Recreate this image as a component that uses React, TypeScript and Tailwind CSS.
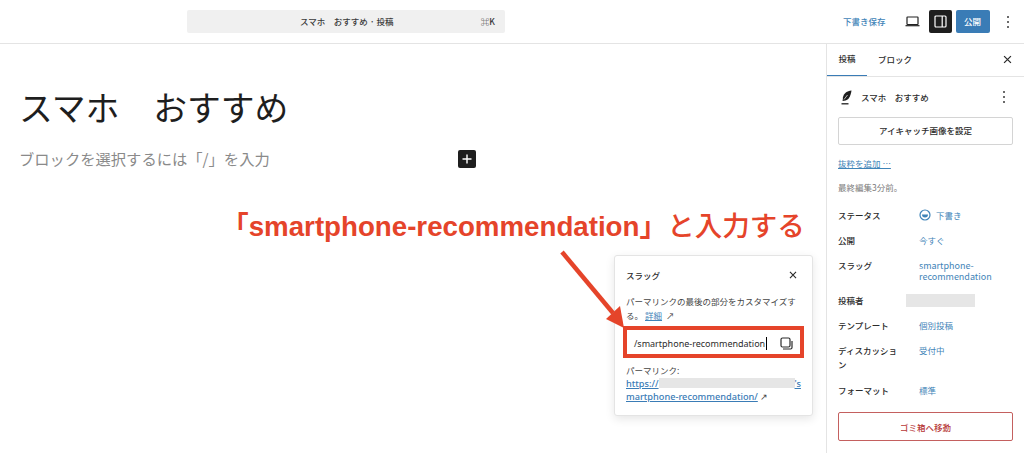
const sans = "font-['Noto_Sans_CJK_JP','Noto_Sans',sans-serif]";

function Dots({ className }: { className?: string }) {
  return (
    <svg width="4" height="14" viewBox="0 0 4 14" className={className} aria-hidden>
      <circle cx="2" cy="2" r="1" fill="#3a3a3a" />
      <circle cx="2" cy="7" r="1" fill="#3a3a3a" />
      <circle cx="2" cy="12" r="1" fill="#3a3a3a" />
    </svg>
  );
}

function Close({ size = 10 }: { size?: number }) {
  return (
    <svg width={size} height={size} viewBox="0 0 10 10" aria-hidden>
      <path d="M1.2 1.2l7.6 7.6M8.8 1.2L1.2 8.8" stroke="#2a2a2a" strokeWidth="1.4" fill="none" />
    </svg>
  );
}

function TopBar() {
  return (
    <header className="flex h-[44px] shrink-0 items-center border-b border-[#e4e4e4] bg-white">
      <div className="ml-[187px] flex h-[23px] w-[318px] items-center rounded-[2px] bg-[#f0f0f0] text-[8.5px] font-medium text-[#3a3a3a]">
        <span className="ml-[113px] whitespace-pre">スマホ　おすすめ · 投稿</span>
        <span className="ml-auto mr-[10px]">⌘K</span>
      </div>
      <span className="ml-[338px] text-[8.5px] font-medium text-[#3f84b8]">下書き保存</span>
      <svg width="15" height="11" viewBox="0 0 15 11" className="ml-[19px]" aria-hidden>
        <rect x="2" y="1" width="11" height="7.5" rx="0.5" fill="none" stroke="#222" strokeWidth="1.2" />
        <path d="M0.5 9.7h14" stroke="#222" strokeWidth="1.2" />
      </svg>
      <div className="ml-[9px] flex h-[23px] w-[23px] items-center justify-center rounded-[2px] bg-[#1e1e1e]">
        <svg width="13" height="13" viewBox="0 0 13 13" aria-hidden>
          <rect x="1" y="1" width="11" height="11" rx="1" fill="none" stroke="#fff" strokeWidth="1.2" />
          <path d="M8.2 1v11" stroke="#fff" strokeWidth="1.2" />
        </svg>
      </div>
      <div className="ml-[4px] flex h-[23px] w-[34px] items-center justify-center rounded-[2px] bg-[#3a7cb6] text-[8.5px] font-medium text-white">
        公開
      </div>
      <Dots className="ml-[16px]" />
    </header>
  );
}

function MetaRow({ label, children, className }: { label: React.ReactNode; children: React.ReactNode; className?: string }) {
  return (
    <div className={`flex text-[8.5px] leading-[14px] ${className ?? ""}`}>
      <span className="w-[81px] shrink-0 pr-[20px] font-medium text-[#2b2b2b]">{label}</span>
      <div className="text-[#3f84b8]">{children}</div>
    </div>
  );
}

function Sidebar() {
  return (
    <aside className="w-[198px] shrink-0 border-l border-[#e4e4e4] bg-white">
      <div className="flex h-[33px] items-center border-b border-[#e4e4e4] pb-[2px] text-[8.5px] font-medium text-[#2b2b2b]">
        <div className="-mb-[2px] flex h-[32px] w-[40px] items-center justify-center border-b-[1.5px] border-[#3a7cb6] pb-[2px]">投稿</div>
        <span className="ml-[11px]">ブロック</span>
        <span className="ml-auto mr-[12px] flex">
          <Close size={9} />
        </span>
      </div>
      <div className="px-[11px]">
        <div className="mt-[13px] flex h-[14px] items-center">
          <svg width="13" height="15" viewBox="0 0 13 15" className="ml-[2px]" aria-hidden>
            <path d="M11.5 0.5C7 1 3.8 3.4 3 7.2L2.6 11l3-.5C8.4 9.8 10.6 6.6 11.5.5z" fill="#1e1e1e" />
            <path d="M4 9.5L7.5 5" stroke="#fff" strokeWidth="0.7" />
            <path d="M1.5 13.8h7" stroke="#1e1e1e" strokeWidth="1.3" />
          </svg>
          <span className="ml-[8px] whitespace-pre text-[8.5px] font-medium text-[#2b2b2b]">スマホ　おすすめ</span>
          <Dots className="ml-auto mr-[7px]" />
        </div>
        <div className="mt-[13px] flex h-[28px] w-[175px] items-center justify-center rounded-[2px] border border-[#d4d4d4] pb-[2px] text-[8.5px] font-medium text-[#2b2b2b]">
          アイキャッチ画像を設定
        </div>
        <div className="mt-[11px] text-[8.5px] leading-[14px] text-[#3f84b8] underline">抜粋を追加 …</div>
        <div className="mt-[10px] text-[8.5px] leading-[14px] text-[#7a7a7a]">最終編集3分前。</div>
        <MetaRow label="ステータス" className="mt-[14px]">
          <span className="flex items-center">
            <svg width="12" height="12" viewBox="0 0 12 12" aria-hidden>
              <circle cx="6" cy="6" r="5" fill="none" stroke="#3f84b8" strokeWidth="1.2" />
              <path d="M3 5.5h6a3 3 0 0 1-6 0z" fill="#3f84b8" />
            </svg>
            <span className="ml-[5px]">下書き</span>
          </span>
        </MetaRow>
        <MetaRow label="公開" className="mt-[11px]">今すぐ</MetaRow>
        <MetaRow label="スラッグ" className="mt-[11px]">
          <div className="pt-[2px] text-[9px] leading-[11px]">
            smartphone-
            <br />
            recommendation
          </div>
        </MetaRow>
        <div className="mt-[11px] flex items-center text-[8.5px] leading-[14px]">
          <span className="w-[68px] shrink-0 font-medium text-[#2b2b2b]">投稿者</span>
          <div className="h-[13px] w-[69px] bg-[#e6e6e6]" />
        </div>
        <MetaRow label="テンプレート" className="mt-[11px]">個別投稿</MetaRow>
        <MetaRow label="ディスカッション" className="mt-[11px]">受付中</MetaRow>
        <MetaRow label="フォーマット" className="mt-[12px]">標準</MetaRow>
        <div className="mt-[15px] flex h-[29px] w-[175px] items-center justify-center rounded-[2px] border border-[#c4605f] pt-[1px] text-[8.5px] font-medium text-[#b83a3a]">
          ゴミ箱へ移動
        </div>
      </div>
    </aside>
  );
}

function SlugPopover() {
  return (
    <div className="absolute left-[614px] top-[255px] h-[161px] w-[199px] rounded-[3px] border border-[#e4e4e4] bg-white shadow-[0_3px_10px_rgba(0,0,0,0.1)]">
      <div className="ml-[11px] mr-[15px] mt-[12px] flex items-center justify-between text-[8.5px] font-medium leading-[14px] text-[#2b2b2b]">
        スラッグ
        <Close size={8} />
      </div>
      <p className="ml-[11px] mr-[10px] mt-[12px] text-[8.5px] leading-[14px] text-[#444]">
        パーマリンクの最後の部分をカスタマイズする。<span className="ml-[2px] text-[#3f84b8] underline">詳細</span>
        <span className="ml-[4px]">↗</span>
      </p>
      <div className="ml-[8px] mt-[4px] flex h-[32px] w-[181px] items-center border-[4px] border-[#e5442a] pl-[7px] pt-[3px] text-[9px] text-[#2b2b2b]">
        <span className="font-['Noto_Sans',sans-serif]">/smartphone-recommendation</span>
        <span className="ml-[1px] h-[13px] w-px bg-black" />
        <svg width="13" height="13" viewBox="0 0 13 13" className="ml-auto mr-[7px]" aria-hidden>
          <rect x="1" y="1" width="9" height="9" rx="1.5" fill="none" stroke="#2b2b2b" strokeWidth="1.2" />
          <path d="M3 12h7.5a1.5 1.5 0 0 0 1.5-1.5V4" fill="none" stroke="#2b2b2b" strokeWidth="1.2" />
        </svg>
      </div>
      <div className="ml-[11px] mr-[8px] mt-[5px] text-[8.5px] leading-[14px]">
        <div className="text-[#444]">パーマリンク:</div>
        <div className="flex text-[9.2px] leading-[13px] font-['Noto_Sans',sans-serif] font-medium text-[#3a7cb6]">
          <span className="underline">https://</span>
          <span className="my-[1px] h-[10px] w-[136px] shrink-0 bg-[#e6e6e6]" />
          <span className="underline">'s</span>
        </div>
        <div className="whitespace-nowrap text-[9.2px] leading-[14px] font-['Noto_Sans',sans-serif] font-medium text-[#3a7cb6]">
          <span className="underline">martphone-recommendation/</span> <span className="text-[#444]">↗</span>
        </div>
      </div>
    </div>
  );
}

export default function App() {
  return (
    <div className={`relative flex h-[453px] w-[1024px] flex-col overflow-hidden bg-white ${sans}`}>
      <TopBar />
      <div className="flex min-h-0 flex-1">
        <main className="flex-1 pl-[19px] pr-[20px]">
          <h1 className="mt-[38px] whitespace-pre text-[33.8px] font-normal leading-[50px] text-[#1e1e1e]">スマホ　おすすめ</h1>
          <div className="mt-[14px] flex h-[24px] items-center">
            <span className="text-[15.3px] text-[#8a8a8a]">ブロックを選択するには「/」を入力</span>
            <div className="ml-[188px] mt-[2px] flex h-[18px] w-[18px] items-center justify-center rounded-[2px] bg-[#1e1e1e] text-[15px] leading-none text-white">
              <svg width="10" height="10" viewBox="0 0 10 10" aria-hidden>
                <path d="M5 0.5v9M0.5 5h9" stroke="#fff" strokeWidth="1.4" />
              </svg>
            </div>
          </div>
        </main>
        <Sidebar />
      </div>

      <SlugPopover />

      {/* annotation on top of the screenshot */}
      <div className="absolute left-[221px] top-[209px] whitespace-nowrap font-['Liberation_Sans','Noto_Sans_CJK_JP',sans-serif] text-[27.7px] font-bold leading-[36px] text-[#e5442a]">
        「smartphone-recommendation」<span className="text-[27.5px] font-medium">と入力する</span>
      </div>
      <svg width="80" height="90" viewBox="0 0 80 90" className="absolute left-[555px] top-[245px]" aria-hidden>
        <path d="M7 7L58 68" stroke="#e5442a" strokeWidth="4.5" fill="none" />
        <polygon points="69,83 51,74 65,61" fill="#e5442a" />
      </svg>
    </div>
  );
}
